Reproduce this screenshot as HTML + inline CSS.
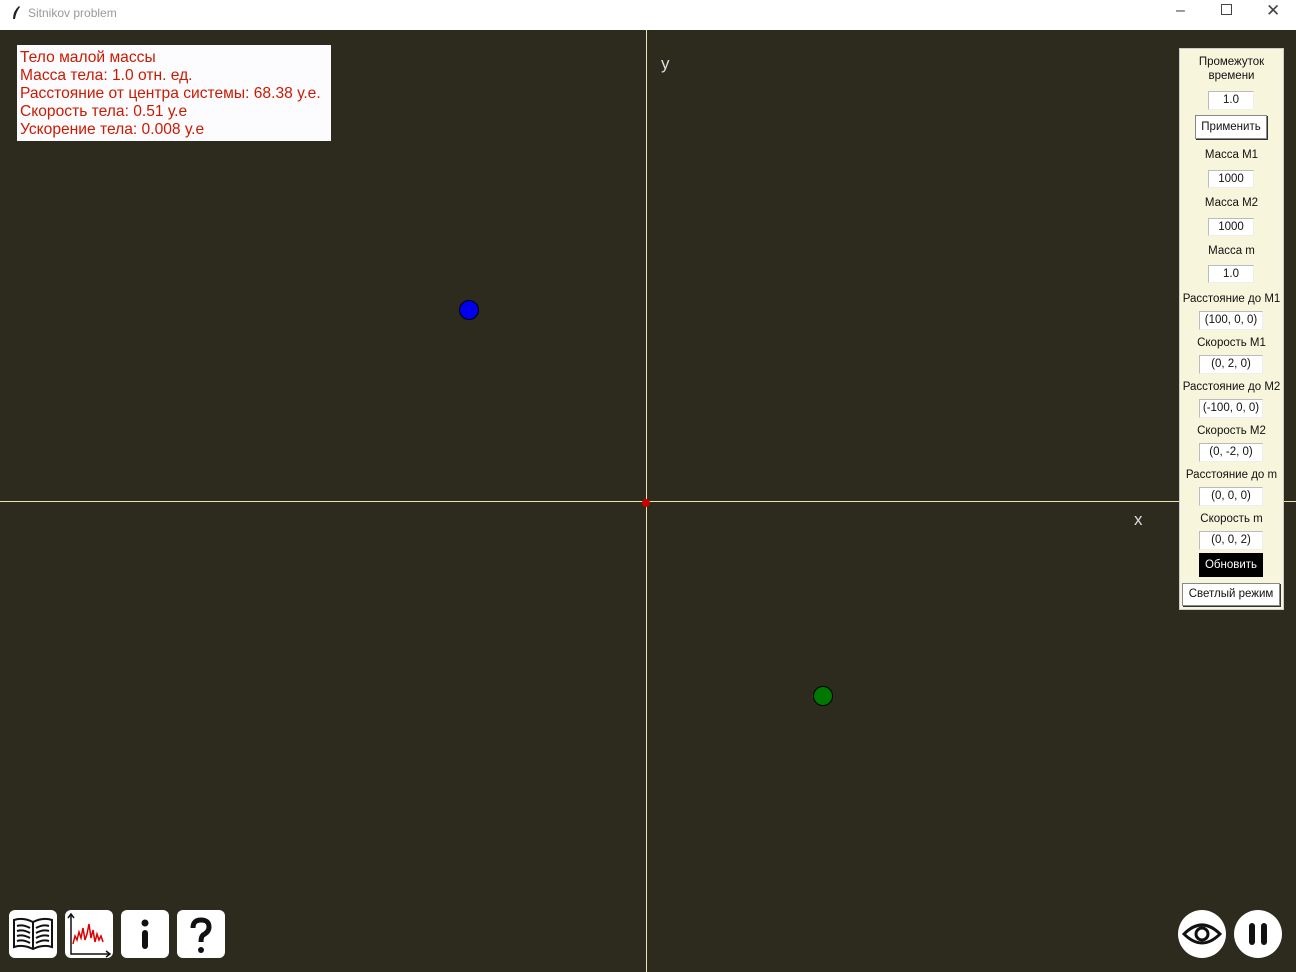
<!DOCTYPE html>
<html><head><meta charset="utf-8"><style>
*{margin:0;padding:0;box-sizing:border-box}
body{width:1296px;height:972px;position:relative;background:#2c2b1e;font-family:"Liberation Sans",sans-serif;overflow:hidden}
.a{position:absolute}
#title{left:0;top:0;width:1296px;height:30px;background:#fff}
#title span{position:absolute;left:28px;top:6px;font-size:12px;color:#999}
.lbl{position:absolute;width:105px;left:1179px;text-align:center;font-size:11.5px;color:#111;line-height:14px}
.ent{position:absolute;background:#fff;border:1px solid #bbb;border-right-color:#eee;border-bottom-color:#eee;font-size:11.5px;text-align:center;line-height:16px;color:#111}
.btn{position:absolute;background:#fff;border:1px solid #888;box-shadow:1px 1px 0 #333;font-size:11.5px;text-align:center;color:#111}
.ib{position:absolute;top:910px;width:48px;height:48px;background:#fff;border-radius:6px}
</style></head><body>
<div id="title" class="a"><svg class="a" style="left:10px;top:5px" width="12" height="16"><path d="M9 1 Q3 6 3 14 L5 14 Q6 7 10 2Z" fill="#222"/></svg><span>Sitnikov problem</span>
<span style="left:1176px;top:2px;color:#444;font-size:16px">–</span>
<span style="left:1221px;top:4px;width:11px;height:11px;border:1px solid #444"></span>
<span style="left:1266px;top:1px;color:#444;font-size:17px">✕</span></div>
<div class="a" style="left:646px;top:30px;width:1px;height:942px;background:#e8e6b0"></div>
<div class="a" style="left:0;top:501px;width:1296px;height:1px;background:#e8e6b0"></div>
<div class="a" style="left:642px;top:499px;width:8px;height:8px;border-radius:50%;background:#c00"></div>
<div class="a" style="left:661px;top:54px;color:#ddd;font-size:17px">y</div>
<div class="a" style="left:1134px;top:510px;color:#ddd;font-size:17px">x</div>
<div class="a" style="left:459px;top:300px;width:20px;height:20px;border-radius:50%;background:#0000ee;border:1px solid #000"></div>
<div class="a" style="left:813px;top:686px;width:20px;height:20px;border-radius:50%;background:#007700;border:1px solid #000"></div>
<div class="a" style="left:17px;top:45px;width:314px;height:96px;background:#fcfcff;color:#cc1a00;font-size:15.6px;line-height:18px;padding:4px 0 0 3px">Тело малой массы<br>Масса тела: 1.0 отн. ед.<br>Расстояние от центра системы: 68.38 у.е.<br>Скорость тела: 0.51 у.е<br>Ускорение тела: 0.008 у.е</div>
<div class="a" style="left:1179px;top:48px;width:105px;height:562px;background:#f7f5dc;border:1px solid #ccc"></div>
<div class="lbl" style="top:55px">Промежуток<br>времени</div>
<div class="ent" style="left:1208px;top:91px;width:46px;height:19px">1.0</div>
<div class="btn" style="left:1195px;top:115px;width:72px;height:24px;line-height:22px">Применить</div>
<div class="lbl" style="top:148px">Масса M1</div>
<div class="ent" style="left:1208px;top:170px;width:46px;height:18px">1000</div>
<div class="lbl" style="top:196px">Масса M2</div>
<div class="ent" style="left:1208px;top:218px;width:46px;height:18px">1000</div>
<div class="lbl" style="top:244px">Масса m</div>
<div class="ent" style="left:1208px;top:265px;width:46px;height:18px">1.0</div>
<div class="lbl" style="top:292px">Расстояние до M1</div>
<div class="ent" style="left:1199px;top:311px;width:64px;height:19px">(100, 0, 0)</div>
<div class="lbl" style="top:336px">Скорость M1</div>
<div class="ent" style="left:1199px;top:355px;width:64px;height:19px">(0, 2, 0)</div>
<div class="lbl" style="top:380px">Расстояние до M2</div>
<div class="ent" style="left:1199px;top:399px;width:64px;height:19px">(-100, 0, 0)</div>
<div class="lbl" style="top:424px">Скорость M2</div>
<div class="ent" style="left:1199px;top:443px;width:64px;height:19px">(0, -2, 0)</div>
<div class="lbl" style="top:468px">Расстояние до m</div>
<div class="ent" style="left:1199px;top:487px;width:64px;height:19px">(0, 0, 0)</div>
<div class="lbl" style="top:512px">Скорость m</div>
<div class="ent" style="left:1199px;top:531px;width:64px;height:19px">(0, 0, 2)</div>
<div class="a" style="left:1199px;top:553px;width:64px;height:24px;background:#000;color:#fff;font-size:11.5px;text-align:center;line-height:24px">Обновить</div>
<div class="btn" style="left:1182px;top:583px;width:98px;height:23px;line-height:21px">Светлый режим</div>
<div class="ib" style="left:9px"><svg width="48" height="48"><g fill="none" stroke="#111" stroke-width="2"><path d="M24 12 Q14 7 5 10 V37 Q14 34 24 39 Q34 34 43 37 V10 Q34 7 24 12Z M24 12 V39"/><path d="M8 16 Q14 14 21 18 M8 21 Q14 19 21 23 M8 26 Q14 24 21 28 M8 31 Q14 29 21 33 M27 18 Q34 14 40 16 M27 23 Q34 19 40 21 M27 28 Q34 24 40 26 M27 33 Q34 29 40 31"/></g></svg></div>
<div class="ib" style="left:65px"><svg width="48" height="48"><g fill="none" stroke="#111" stroke-width="1.5"><path d="M6 4 V44 H45"/><path d="M3 8 L6 4 L9 8 M41 41 L45 44 L41 47"/></g><path d="M8 34 L10 26 L12 30 L14 22 L16 28 L18 18 L20 30 L22 24 L24 14 L26 28 L28 20 L30 32 L32 24 L34 30 L36 26 L38 32" fill="none" stroke="#d00" stroke-width="1.5"/></svg></div>
<div class="ib" style="left:121px"><svg width="48" height="48"><circle cx="24" cy="13" r="3.5" fill="#111"/><rect x="21" y="20" width="6" height="19" rx="3" fill="#111"/></svg></div>
<div class="ib" style="left:177px"><svg width="48" height="48"><path d="M16 18 Q16 10 24 10 Q32 10 32 17 Q32 22 26 25 Q24 27 24 32" fill="none" stroke="#111" stroke-width="5"/><circle cx="24" cy="40" r="3" fill="#111"/></svg></div>
<div class="a" style="left:1178px;top:910px;width:48px;height:48px;border-radius:50%;background:#fff"><svg width="48" height="48"><path d="M6 24 Q24 6 42 24 Q24 42 6 24Z" fill="none" stroke="#111" stroke-width="3"/><circle cx="24" cy="24" r="6" fill="none" stroke="#111" stroke-width="3"/></svg></div>
<div class="a" style="left:1234px;top:910px;width:48px;height:48px;border-radius:50%;background:#fff"><svg width="48" height="48"><rect x="15" y="13" width="6" height="22" rx="3" fill="#111"/><rect x="27" y="13" width="6" height="22" rx="3" fill="#111"/></svg></div>
</body></html>
